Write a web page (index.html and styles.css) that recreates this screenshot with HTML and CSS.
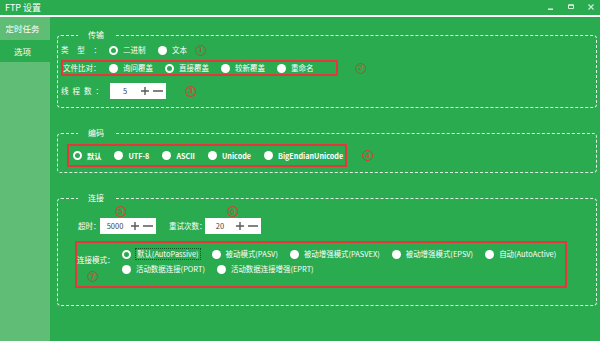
FILE: index.html
```html
<!DOCTYPE html>
<html lang="zh">
<head>
  <meta charset="UTF-8" />
  <meta name="viewport" content="width=device-width, initial-scale=1.0"/>
  <title>FTP 设置</title>
  <link rel="stylesheet" href="styles.css">
</head>
<body>
<div class="window">
  <div class="titlebar">
    <span class="title">FTP 设置</span>
    <div class="win-controls">
      <svg viewBox="0 0 10 10"><path d="M2 6.2h5" stroke-width="1.6"/></svg>
      <svg viewBox="0 0 10 10"><path d="M2.5 1.8h5v3.7h-5z" stroke-width="1"/><path d="M2.5 2.2h5" stroke-width="1.2"/></svg>
      <svg viewBox="0 0 10 10"><path d="M2.5 1.5l5 5M7.5 1.5l-5 5" stroke-width="1.2"/></svg>
    </div>
  </div>
  <div class="body">
    <div class="sidebar">
      <div class="nav-item">定时任务</div>
      <div class="nav-item active">选项</div>
    </div>
    <div class="content">

      <fieldset class="group g-transfer">
        <legend>传输</legend>
        <div class="row r-type">
          <span class="spread lbl-type">类型：</span>
          <label class="opt w49"><span class="radio checked"></span>二进制</label>
          <label class="opt"><span class="radio"></span>文本</label>
          <span class="mark m1">1</span>
        </div>
        <div class="row r-compare">
          <div class="outline compare-box">
            <span class="lbl-compare">文件比对：</span>
            <label class="opt w56"><span class="radio"></span>询问覆盖</label>
            <label class="opt w56"><span class="radio checked"></span>直接覆盖</label>
            <label class="opt w56"><span class="radio"></span>较新覆盖</label>
            <label class="opt"><span class="radio"></span>重命名</label>
          </div>
          <span class="mark m2">2</span>
        </div>
        <div class="row r-threads">
          <span class="spread lbl-threads">线程数：</span>
          <div class="spin">
            <span class="spin-val">5</span>
            <svg class="pm" viewBox="0 0 24 10"><path d="M1 5h8M5 1v8M13 5h10"/></svg>
          </div>
          <span class="mark m3">3</span>
        </div>
      </fieldset>

      <fieldset class="group g-encoding">
        <legend>编码</legend>
        <div class="row">
          <div class="outline encoding-box">
            <label class="opt"><span class="radio checked"></span>默认</label>
            <label class="opt"><span class="radio"></span>UTF-8</label>
            <label class="opt"><span class="radio"></span>ASCII</label>
            <label class="opt"><span class="radio"></span>Unicode</label>
            <label class="opt"><span class="radio"></span>BigEndianUnicode</label>
          </div>
          <span class="mark m4">4</span>
        </div>
      </fieldset>

      <fieldset class="group g-connect">
        <legend>连接</legend>
        <div class="row r-marks">
          <span class="mark m5">5</span>
          <span class="mark m6">6</span>
        </div>
        <div class="row r-spins">
          <span class="lbl-timeout">超时：</span>
          <div class="spin">
            <span class="spin-val">5000</span>
            <svg class="pm" viewBox="0 0 24 10"><path d="M1 5h8M5 1v8M13 5h10"/></svg>
          </div>
          <span class="lbl-retry">重试次数：</span>
          <div class="spin">
            <span class="spin-val">20</span>
            <svg class="pm" viewBox="0 0 24 10"><path d="M1 5h8M5 1v8M13 5h10"/></svg>
          </div>
        </div>
        <div class="row">
          <div class="outline conn-box">
            <div class="conn-left">
              <span class="conn-label">连接模式：</span>
              <span class="mark m7">7</span>
            </div>
            <div class="conn-opts">
              <div class="opt-row">
                <label class="opt"><span class="radio checked"></span><span class="focus">默认(AutoPassive)</span></label>
                <label class="opt"><span class="radio"></span>被动模式(PASV)</label>
                <label class="opt"><span class="radio"></span>被动增强模式(PASVEX)</label>
                <label class="opt"><span class="radio"></span>被动增强模式(EPSV)</label>
                <label class="opt"><span class="radio"></span>自动(AutoActive)</label>
              </div>
              <div class="opt-row second">
                <label class="opt"><span class="radio"></span>活动数据连接(PORT)</label>
                <label class="opt"><span class="radio"></span>活动数据连接增强(EPRT)</label>
              </div>
            </div>
          </div>
        </div>
      </fieldset>

    </div>
  </div>
</div>
</body>
</html>
```

FILE: styles.css
```css
* { box-sizing: border-box; margin: 0; padding: 0; }
body {
  font-family: "Noto Sans CJK SC", "Noto Sans", sans-serif;
  font-size: 7.5px;
  line-height: 10px;
  color: #fff;
  background: #2bab4f;
  width: 600px;
  height: 341px;
  overflow: hidden;
}

.window {
  display: flex;
  flex-direction: column;
  height: 341px;
}

/* title bar */
.titlebar {
  height: 17px;
  border-bottom: 2px solid #fff;
  display: flex;
  justify-content: space-between;
  align-items: flex-start;
}

.title {
  font-size: 9px;
  line-height: 15px;
  padding-left: 5px;
}

.win-controls {
  display: flex;
  gap: 10px;
  padding: 3px 4px 0 0;
}

.win-controls svg {
  width: 10px;
  height: 10px;
  fill: none;
  stroke: rgba(255,255,255,0.78);
}

.body {
  flex: 1;
  display: flex;
}

/* side nav */
.sidebar {
  width: 50px;
  background: #5fbd76;
}

.nav-item {
  height: 23px;
  line-height: 23px;
  text-align: center;
  padding-right: 5px;
  font-size: 8.5px;
}

.nav-item.active {
  height: 22px;
  line-height: 22px;
  background: #2bab4f;
}

.content {
  flex: 1;
  padding-top: 13px;
}

/* groups */
.group {
  min-width: 0;
  margin: 0 3px 20px 7px;
  padding: 0 3px;
  border: 1px dashed rgba(255,255,255,0.85);
  border-radius: 4px;
}

.group legend {
  margin-left: 17px;
  padding: 0 10px;
  font-size: 8px;
  line-height: 10px;
}

.g-transfer { padding-bottom: 8px; }
.g-encoding { padding-bottom: 5px; }
.g-connect { padding-bottom: 17px; }

.row {
  display: flex;
  align-items: center;
  white-space: nowrap;
}

.spread {
  display: inline-block;
  text-align-last: justify;
}

.outline {
  border: 2px solid #e8343b;
}

/* red circled numbers */
.mark {
  flex: none;
  display: inline-flex;
  align-items: center;
  justify-content: center;
  width: 11px;
  height: 11px;
  border: 1px solid #e2352f;
  border-radius: 50%;
  color: #e2352f;
  font-family: "Liberation Sans", sans-serif;
  font-size: 8px;
  line-height: 1;
}

/* radio */
.opt {
  display: inline-flex;
  align-items: center;
  gap: 5px;
  height: 10px;
  white-space: nowrap;
}

.radio {
  flex: none;
  width: 9px;
  height: 9px;
  border-radius: 50%;
  background: #fff;
}

.radio.checked {
  background: transparent;
  border: 2.5px solid #fff;
}

.w49 { width: 49px; }
.w56 { width: 56px; }

/* spin box */
.spin {
  flex: none;
  display: flex;
  align-items: center;
  width: 56px;
  height: 16px;
  background: #fff;
  color: #444;
  padding-right: 2px;
}

.spin-val {
  width: 30px;
  text-align: center;
}

.spin .pm {
  width: 24px;
  height: 10px;
  margin-left: auto;
  fill: none;
  stroke: #5a5a5a;
  stroke-width: 1.4;
}

/* transfer */
.r-type { height: 14px; margin-top: 3px; }
.lbl-type { width: 40px; margin-right: 8px; }
.m1 { margin-left: 8px; }

.r-compare { margin-top: 3px; }
.compare-box {
  display: flex;
  align-items: center;
  width: 277px;
  height: 16px;
}
.lbl-compare { width: 46px; }
.m2 { margin-left: 17px; }

.r-threads { margin-top: 7px; }
.lbl-threads { width: 42px; margin-right: 7px; }
.m3 { margin-left: 19px; }

/* encoding */
.g-encoding .row { margin-top: 6px; }
.encoding-box {
  display: flex;
  align-items: center;
  gap: 13px;
  width: 280px;
  height: 23px;
  margin-left: 6px;
  padding-left: 4px;
  font-size: 7.2px;
  font-weight: bold;
}
.m4 { margin-left: 15px; }

/* connect */
.r-marks { height: 11px; margin-top: 3px; }
.m5 { margin-left: 54px; }
.m6 { margin-left: 101px; }

.r-spins { margin-top: 1px; }
.lbl-timeout { margin-left: 17px; width: 22px; }
.lbl-retry { margin-left: 13px; width: 36px; }

.r-spins + .row { margin-top: 7px; }
.conn-box {
  display: flex;
  width: 492px;
  height: 47px;
  margin-left: 14px;
}

.conn-left {
  width: 45px;
  display: flex;
  flex-direction: column;
  align-items: flex-start;
}
.conn-label { margin-top: 12px; }
.m7 { margin: 6px 0 0 10px; }

.opt-row {
  display: flex;
  gap: 12px;
  margin-top: 6px;
  font-size: 7.45px;
}
.opt-row.second { margin-top: 5px; }

.focus {
  outline: 1px dotted rgba(0,0,0,0.5);
  padding: 0 1px;
}
```
